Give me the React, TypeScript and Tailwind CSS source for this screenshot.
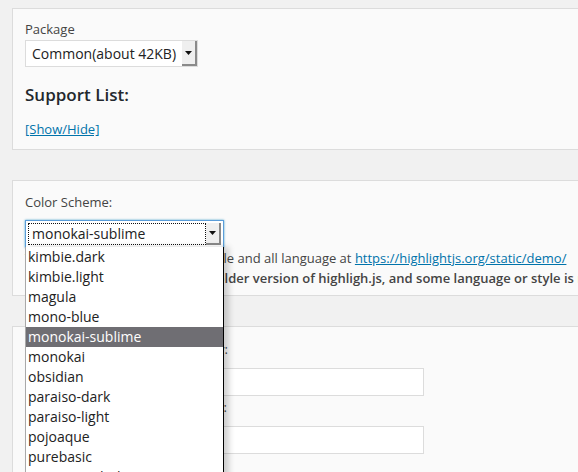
import React from 'react';

const schemes = [
  'kimbie.dark',
  'kimbie.light',
  'magula',
  'mono-blue',
  'monokai-sublime',
  'monokai',
  'obsidian',
  'paraiso-dark',
  'paraiso-light',
  'pojoaque',
  'purebasic',
  'qtcreator_dark',
  'qtcreator_light',
];

const Arrow = () => (
  <svg width="7" height="4" viewBox="0 0 7 4">
    <path d="M0 0h7L3.5 4z" fill="#111" />
  </svg>
);

export default function App() {
  const selected = 'monokai-sublime';

  return (
    <div className="h-[472px] w-[578px] overflow-hidden bg-[#f1f1f1] pl-3 pt-2 font-['Open_Sans',sans-serif] text-[13px] text-[#444]">
      {/* package panel */}
      <section className="h-[142px] border-y border-l border-[#dcdcdc] bg-[#fafafa] pl-3 pt-[11px]">
        <div className="leading-[19px]">Package</div>
        <div className="mt-[1px] flex h-[27px] w-[173px] border border-[#dcdcdc] bg-white">
          <span className="flex-1 pl-[6px] text-[14px] leading-[25px] text-[#222]">Common(about 42KB)</span>
          <span className="flex w-[15px] items-center justify-center border-r-2 border-b-2 border-[#8a8a8a] bg-[#efefef]">
            <Arrow />
          </span>
        </div>
        <h3 className="mt-[16px] text-[17px] leading-[23px] font-semibold text-[#23282d]">Support List:</h3>
        <a href="#" className="mt-[14px] inline-block text-[13px] leading-[18px] text-[#0073aa] underline">
          [Show/Hide]
        </a>
      </section>

      {/* color scheme panel */}
      <section className="mt-[30px] h-[116px] border-y border-l border-[#dcdcdc] bg-[#fafafa] pl-3 pt-[12px]">
        <div className="leading-[19px]">Color Scheme:</div>
        <div className="relative mt-[8px] w-[199px]">
          <div className="flex h-[28px] border border-[#5b9dd9] bg-white p-[2px] shadow-[0_0_2px_rgba(30,140,190,0.8)]">
            <span className="flex-1 border border-dotted border-[#111] pl-[3px] text-[14px] leading-[20px] text-[#222]">
              {selected}
            </span>
            <span className="flex w-[15px] items-center justify-center border-r-2 border-b-2 border-[#8a8a8a] bg-[#efefef]">
              <Arrow />
            </span>
          </div>
          <ul className="absolute left-0 top-[27px] z-10 w-[199px] border-l border-[#a9a9a9] border-r border-r-black bg-white shadow-[5px_0_6px_rgba(0,0,0,0.18)]">
            {schemes.map((s) => (
              <li
                key={s}
                className={
                  s === selected
                    ? 'h-[20px] bg-[#6f6e73] pl-[2px] text-[14px] leading-[20px] text-white'
                    : 'h-[20px] pl-[2px] text-[14px] leading-[20px] text-[#222]'
                }
              >
                {s}
              </li>
            ))}
          </ul>
        </div>
        <p className="whitespace-nowrap leading-[20px]">
          You can find preview of every style and all language at{' '}
          <a href="#" className="text-[#0073aa] underline">
            https://highlightjs.org/static/demo/
          </a>
        </p>
        <p className="whitespace-nowrap leading-[20px] font-semibold">
          Notice: this plugin is using the older version of highligh.js, and some language or style is not supported.
        </p>
      </section>

      {/* font panel */}
      <section className="mt-[30px] h-[200px] border-y border-l border-[#dcdcdc] bg-[#fafafa] pl-3 pt-[13px]">
        <div className="whitespace-nowrap leading-[19px]">Custom Code Blocks' Font Family:</div>
        <div className="mt-[9px] h-[28px] w-[399px] border border-[#dcdcdc] bg-white" />
        <div className="mt-[2px] whitespace-nowrap leading-[19px]">Custom Code Blocks' Line Height:</div>
        <div className="mt-[9px] h-[28px] w-[399px] border border-[#dcdcdc] bg-white" />
      </section>
    </div>
  );
}
